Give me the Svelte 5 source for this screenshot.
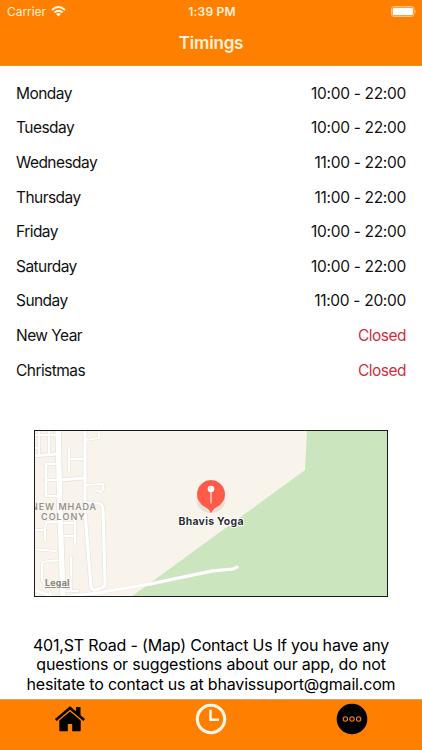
<script lang="ts">
  // Types
  type Timing = {
    day: string;
    hours: string | null;
  };

  // Data
  const timings: Timing[] = [
    { day: 'Monday', hours: '10:00 - 22:00' },
    { day: 'Tuesday', hours: '10:00 - 22:00' },
    { day: 'Wednesday', hours: '11:00 - 22:00' },
    { day: 'Thursday', hours: '11:00 - 22:00' },
    { day: 'Friday', hours: '10:00 - 22:00' },
    { day: 'Saturday', hours: '10:00 - 22:00' },
    { day: 'Sunday', hours: '11:00 - 20:00' },
    { day: 'New Year', hours: null },
    { day: 'Christmas', hours: null }
  ];

  const mainRoad = 'M24 -2L26 82L29 170';
  const streets = [
    'M51 -2L51 82L57 157Q58 161 62 160L67 158Q71 157 71 152L69 80Q69 73 63 73H52',
    'M-2 26L23 24',
    'M25 50L51 48'
  ];
  const lanes = [
    'M5 0V25', 'M15 0V25', 'M-2 5H21', 'M-2 18H5',
    'M35 19V41', 'M35 29H51', 'M65 0V8L52 10',
    'M25 34H12V66H26', 'M12 50H24',
    'M52 55L69 54V59Q69 63 63 61',
    'M27 93H41', 'M41 85V113', 'M29 106H41',
    'M-2 100H9Q12 99 12 92H24', 'M11 99V111', 'M-2 119L22 121',
    'M8 150V134Q9 131 15 131L28 130', 'M8 150L17 164', 'M37 127V160', 'M29 161H44'
  ];
  const longRoad = 'M-2 159L20 167M28 167L63 163L116 154L178 141L199 139L203 137';
</script>

<div class="screen">
  <header class="header">
    <div class="status">
      <div class="carrier">
        <span>Carrier</span>
        <svg class="wifi" viewBox="0 0 15 11" fill="none" stroke="#fff8e5" stroke-width="1.9">
          <path d="M1 4Q7.5 -1.9 14 4" />
          <path d="M3.3 6.5Q7.5 2.9 11.7 6.5" />
          <path d="M5.1 8Q7.5 6.1 9.9 8L7.5 10.5Z" fill="#fff8e5" stroke="none" />
        </svg>
      </div>
      <span class="time">1:39 PM</span>
      <svg class="battery" viewBox="0 0 26 11">
        <rect x=".5" y=".5" width="22.5" height="10" rx="2.5" fill="none" stroke="#ffc58b" />
        <rect x="1.7" y="1.7" width="20.2" height="7.6" rx="1.2" fill="#fff" />
        <path d="M24 3.7Q25.6 5.5 24 7.3Z" fill="#ffc58b" />
      </svg>
    </div>
    <h1 class="title">Timings</h1>
  </header>

  <main class="content">
    <ul class="timings">
      {#each timings as { day, hours }}
        <li class="row">
          <span class="day">{day}</span>
          <span class="hours" class:closed={!hours}>{hours ?? 'Closed'}</span>
        </li>
      {/each}
    </ul>

    <div class="map">
      <svg viewBox="1 1 352 165" width="352" height="165">
        <rect width="354" height="167" fill="#f8f4ec" />
        <path d="M273 0L271 40L97 167H354V0Z" fill="#cbe5be" />

        <!-- Road casings first, then the white fills -->
        <g fill="none" stroke-linejoin="round" stroke-linecap="round">
          <g stroke="#e5e1dc">
            {#each lanes as d}<path {d} stroke-width="3" />{/each}
            {#each streets as d}<path {d} stroke-width="4.4" />{/each}
            <path d={longRoad} stroke-width="3.6" />
            <path d={mainRoad} stroke-width="6.8" />
          </g>
          <g stroke="#fff">
            {#each lanes as d}<path {d} stroke-width="2" />{/each}
            {#each streets as d}<path {d} stroke-width="3.2" />{/each}
            <path d={longRoad} stroke-width="3" />
            <path d={mainRoad} stroke-width="5.4" />
          </g>
        </g>

        <g class="area">
          <text x="-3" y="79.5" textLength="65">NEW MHADA</text>
          <text x="7" y="89.5" textLength="43.5">COLONY</text>
        </g>
        <text class="legal" x="11" y="156" textLength="24.5">Legal</text>

        <ellipse cx="177" cy="70" rx="14.5" ry="13" fill="#8b6a50" opacity=".14" />
        <path
          d="M177 50A14.2 14.2 0 0 1 182.5 77.2Q178.8 79 177 83.2Q175.2 79 171.5 77.2A14.2 14.2 0 0 1 177 50Z"
          fill="#ff5b48"
        />
        <path d="M177 61V73" stroke="#ffd9d1" stroke-width="1.3" stroke-linecap="round" />
        <circle cx="177" cy="59" r="3.3" fill="#fff" />
        <circle cx="176" cy="58" r=".9" fill="#ffc1b8" />
        <text class="place" x="144.5" y="95" textLength="65">Bhavis Yoga</text>
      </svg>
    </div>

    <p class="contact">
      401,ST Road - (Map) Contact Us If you have any<br />
      questions or suggestions about our app, do not<br />
      hesitate to contact us at bhavissuport@gmail.com
    </p>
  </main>

  <nav class="tabs">
    <button class="tab" aria-label="Home">
      <svg viewBox="0 0 32 32" width="32" height="32">
        <path d="M1.8 17L16 5L30.2 17" fill="none" stroke="#000" stroke-width="2.6" />
        <path d="M22 4H26.5V13.5L22 9.7Z" />
        <path d="M5.3 17.6L16 8.5L26.7 17.6V27.4Q26.7 28.2 25.9 28.2H18.2V21H13.8V28.2H6.1Q5.3 28.2 5.3 27.4Z" />
      </svg>
    </button>
    <button class="tab" aria-label="Timings">
      <svg viewBox="0 0 32 32" width="32" height="32" fill="none" stroke="#fff8e8">
        <circle cx="16" cy="16" r="13.7" stroke-width="3.1" />
        <path d="M15.5 6.8V16.8H24" stroke-width="2.5" />
      </svg>
    </button>
    <button class="tab" aria-label="More">
      <svg viewBox="0 0 32 32" width="32" height="32">
        <circle cx="16" cy="16" r="15.3" />
        <g fill="none" stroke="#f28018" stroke-width="1.1">
          <circle cx="9.4" cy="16" r="2.2" />
          <circle cx="16" cy="16" r="2.2" />
          <circle cx="22.6" cy="16" r="2.2" />
        </g>
      </svg>
    </button>
  </nav>
</div>

<style>
  :global(body) { margin: 0; background: #fff; }
  .screen { display: flex; flex-direction: column; width: 422px; height: 750px; overflow: hidden; background: #fff; color: #111; font-family: Inter, "Liberation Sans", sans-serif; }
  .header { flex: none; height: 66px; box-sizing: border-box; background: #ff8000; color: #fff2da; border-bottom: 1px solid #f58a22; }
  .status { display: grid; grid-template-columns: 1fr auto 1fr; align-items: center; height: 22px; padding: 0 5px 0 7px; font-size: 12px; }
  .carrier { display: flex; align-items: center; gap: 5px; letter-spacing: -0.05px; }
  .wifi { width: 15px; height: 11px; }
  .time { font-weight: 600; letter-spacing: 0.2px; }
  .battery { justify-self: end; width: 26px; height: 11px; }
  .title { margin: 0; text-align: center; font-size: 17px; line-height: 43px; font-weight: 600; letter-spacing: -0.2px; }
  .content { flex: 1; min-height: 0; }
  .timings { list-style: none; margin: 0; padding: 10px 16px 0; }
  .row { display: flex; justify-content: space-between; align-items: center; height: 34.6px; font-size: 15.5px; }
  .day { letter-spacing: -0.55px; }
  .hours { letter-spacing: -0.3px; }
  .closed { color: #cc2f40; letter-spacing: -0.5px; }
  .map { width: 352px; height: 165px; margin: 42.6px auto 0; border: 1px solid #1b1b1b; }
  .map svg { display: block; }
  .area { font-size: 9px; font-weight: 500; fill: #8c8986; }
  .legal { font-size: 9px; font-weight: 700; fill: #858380; text-decoration: underline; }
  .place { font-size: 10.5px; font-weight: 700; fill: #2d2d33; stroke: #fff; stroke-width: 2px; paint-order: stroke; }
  .contact { margin: 39px 0 0; text-align: center; white-space: nowrap; font-size: 16px; line-height: 19.5px; letter-spacing: -0.18px; color: #000; }
  .tabs { flex: none; display: grid; grid-template-columns: repeat(3, 1fr); height: 51px; box-sizing: border-box; background: #ff8000; border-top: 1px solid #d9a36b; }
  .tab { display: flex; justify-content: center; align-items: flex-start; padding: 3px 0 0; border: 0; background: none; }
</style>
